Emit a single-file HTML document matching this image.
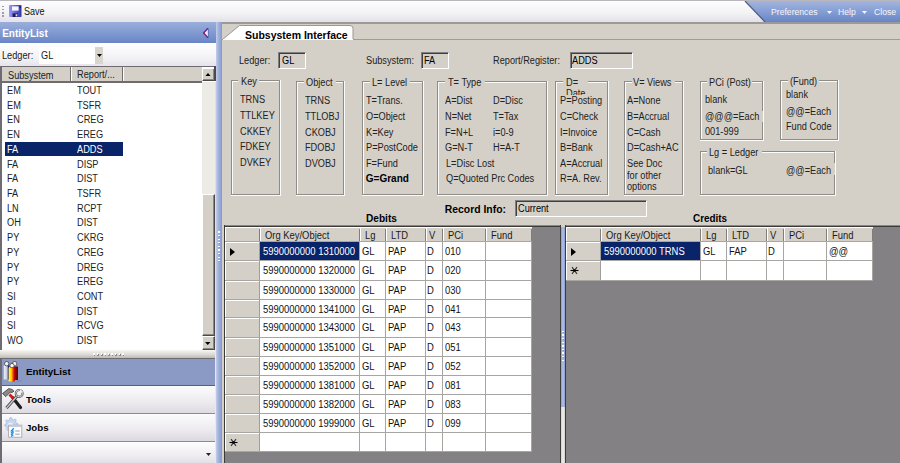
<!DOCTYPE html><html><head><meta charset="utf-8"><style>
html,body{margin:0;padding:0;}
body{width:900px;height:463px;overflow:hidden;position:relative;background:#d4d0c8;font-family:"Liberation Sans", sans-serif;}
.t{position:absolute;white-space:nowrap;}
div{box-sizing:border-box;}
</style></head><body>
<div style="position:absolute;left:0px;top:0px;width:900px;height:1px;background:#b9b7bd"></div>
<div style="position:absolute;left:0px;top:1px;width:900px;height:21px;background:linear-gradient(#fdfdfe,#f2f1f4 60%,#e3e1e8)"></div>
<div style="position:absolute;left:0px;top:21px;width:216px;height:1.5px;background:#e9e4e4"></div>
<div style="position:absolute;left:216px;top:21.5px;width:684px;height:2.2px;background:#a9a6a6"></div>
<div style="position:absolute;left:2px;top:5.5px;width:1.5px;height:1.5px;background:#9c9cac"></div>
<div style="position:absolute;left:2px;top:8.8px;width:1.5px;height:1.5px;background:#9c9cac"></div>
<div style="position:absolute;left:2px;top:12.1px;width:1.5px;height:1.5px;background:#9c9cac"></div>
<div style="position:absolute;left:2px;top:15.399999999999999px;width:1.5px;height:1.5px;background:#9c9cac"></div>
<svg style="position:absolute;left:8.5px;top:5px" width="13" height="12.5" viewBox="0 0 13 12.5">
<defs><linearGradient id="fg" x1="0" y1="0" x2="1" y2="0"><stop offset="0" stop-color="#9a9af4"/><stop offset="0.5" stop-color="#6464d8"/><stop offset="1" stop-color="#3434a0"/></linearGradient></defs>
<rect x="0" y="0" width="12.5" height="12" rx="0.8" fill="url(#fg)"/>
<rect x="3" y="1.4" width="6.6" height="4.2" fill="#f6f6ff"/>
<rect x="3.6" y="8.4" width="5.4" height="3.6" fill="#1c1c50"/>
<rect x="6.6" y="9.2" width="1.8" height="2.2" fill="#d8d8f0"/>
<rect x="10.6" y="1" width="1.4" height="2" fill="#202070"/>
</svg>
<div class="t" style="left:24px;top:6.74px;font-size:10px;line-height:10px;color:#111;font-weight:normal;transform:scaleX(0.9);transform-origin:0 0;">Save</div>
<svg style="position:absolute;left:744px;top:1px" width="156" height="21" viewBox="0 0 156 21">
<defs><linearGradient id="mg" x1="0" y1="0" x2="0" y2="1"><stop offset="0" stop-color="#a3b5df"/><stop offset="1" stop-color="#6786c7"/></linearGradient></defs>
<polygon points="1,0 156,0 156,21 21,21" fill="url(#mg)"/>
<line x1="1" y1="0" x2="21" y2="21" stroke="#4a5a86" stroke-width="1.2"/>
</svg>
<div class="t" style="left:770.6px;top:7.07px;font-size:9.6px;line-height:9.6px;color:#f4f6fc;font-weight:normal;transform:scaleX(0.9);transform-origin:0 0;">Preferences</div>
<svg style="position:absolute;left:827px;top:10.5px" width="5" height="3" viewBox="0 0 5 3"><polygon points="0,0 5,0 2.5,3" fill="#f4f6fc"/></svg>
<div class="t" style="left:837.8px;top:7.07px;font-size:9.6px;line-height:9.6px;color:#f4f6fc;font-weight:normal;transform:scaleX(0.9);transform-origin:0 0;">Help</div>
<svg style="position:absolute;left:862px;top:10.5px" width="5" height="3" viewBox="0 0 5 3"><polygon points="0,0 5,0 2.5,3" fill="#f4f6fc"/></svg>
<div class="t" style="left:874.2px;top:7.07px;font-size:9.6px;line-height:9.6px;color:#f4f6fc;font-weight:normal;transform:scaleX(0.9);transform-origin:0 0;">Close</div>
<div style="position:absolute;left:0px;top:22px;width:216px;height:21.2px;background:linear-gradient(#9aaedb,#6986c6)"></div>
<div class="t" style="left:2.2px;top:28.73px;font-size:10px;line-height:10px;color:#fff;font-weight:bold;">EntityList</div>
<svg style="position:absolute;left:202px;top:27px" width="8" height="12" viewBox="0 0 8 12">
<polygon points="6,1.5 6,10.5 1.8,6" fill="#f4f0f8"/>
<path d="M6,1.3 L1.6,6 L6,10.7" fill="none" stroke="#6a1a9a" stroke-width="1.3"/>
<path d="M2.2,5.2 L4,3.4 M2.2,6.8 L4,8.6" stroke="#c02040" stroke-width="0.8"/>
<line x1="6.3" y1="1.5" x2="6.3" y2="10.5" stroke="#5a66a8" stroke-width="0.8"/>
</svg>
<div style="position:absolute;left:0px;top:43px;width:216px;height:23px;background:linear-gradient(#ffffff,#f1f0f4 70%,#e6e4ea)"></div>
<div class="t" style="left:2px;top:50.73px;font-size:10px;line-height:10px;color:#1a1a1a;font-weight:normal;transform:scaleX(0.92);transform-origin:0 0;">Ledger:</div>
<div style="position:absolute;left:38.5px;top:46.5px;width:56.5px;height:17px;background:#fff"></div>
<div class="t" style="left:41.3px;top:50.73px;font-size:10px;line-height:10px;color:#1a1a1a;font-weight:normal;transform:scaleX(0.92);transform-origin:0 0;">GL</div>
<div style="position:absolute;left:95px;top:46.5px;width:8px;height:17px;background:#d8d5ce"></div>
<svg style="position:absolute;left:97px;top:54px" width="5" height="3" viewBox="0 0 5 3"><polygon points="0,0 5,0 2.5,3" fill="#000"/></svg>
<div style="position:absolute;left:0px;top:66px;width:216px;height:284px;background:#fff"></div>
<div style="position:absolute;left:0px;top:66px;width:2px;height:284px;background:#6e6c70"></div>
<div style="position:absolute;left:0px;top:66px;width:216px;height:1px;background:#6e6c70"></div>
<div style="position:absolute;left:2px;top:67px;width:200px;height:14px;background:#d4d0c8"></div>
<div style="position:absolute;left:2px;top:81px;width:200px;height:1.5px;background:#6e6c70"></div>
<div style="position:absolute;left:69.5px;top:67px;width:1px;height:14px;background:#6e6c70"></div>
<div style="position:absolute;left:70.5px;top:67px;width:1px;height:14px;background:#fff"></div>
<div style="position:absolute;left:121.8px;top:67px;width:1px;height:14px;background:#6e6c70"></div>
<div style="position:absolute;left:122.8px;top:67px;width:1px;height:14px;background:#fff"></div>
<div class="t" style="left:7.5px;top:70.73px;font-size:10px;line-height:10px;color:#222;font-weight:normal;transform:scaleX(0.92);transform-origin:0 0;">Subsystem</div>
<div class="t" style="left:76.7px;top:69.73px;font-size:10px;line-height:10px;color:#222;font-weight:normal;transform:scaleX(0.92);transform-origin:0 0;">Report/...</div>
<div class="t" style="left:7.4px;top:85.73px;font-size:10px;line-height:10px;color:#222;font-weight:normal;transform:scaleX(0.92);transform-origin:0 0;">EM</div>
<div class="t" style="left:77.2px;top:85.73px;font-size:10px;line-height:10px;color:#222;font-weight:normal;transform:scaleX(0.92);transform-origin:0 0;">TOUT</div>
<div class="t" style="left:7.4px;top:100.73px;font-size:10px;line-height:10px;color:#222;font-weight:normal;transform:scaleX(0.92);transform-origin:0 0;">EM</div>
<div class="t" style="left:77.2px;top:100.73px;font-size:10px;line-height:10px;color:#222;font-weight:normal;transform:scaleX(0.92);transform-origin:0 0;">TSFR</div>
<div class="t" style="left:7.4px;top:114.73px;font-size:10px;line-height:10px;color:#222;font-weight:normal;transform:scaleX(0.92);transform-origin:0 0;">EN</div>
<div class="t" style="left:77.2px;top:114.73px;font-size:10px;line-height:10px;color:#222;font-weight:normal;transform:scaleX(0.92);transform-origin:0 0;">CREG</div>
<div class="t" style="left:7.4px;top:129.73px;font-size:10px;line-height:10px;color:#222;font-weight:normal;transform:scaleX(0.92);transform-origin:0 0;">EN</div>
<div class="t" style="left:77.2px;top:129.73px;font-size:10px;line-height:10px;color:#222;font-weight:normal;transform:scaleX(0.92);transform-origin:0 0;">EREG</div>
<div style="position:absolute;left:4.75px;top:141.68px;width:118.5px;height:14.2px;background:#0a246a"></div>
<div class="t" style="left:7.4px;top:144.73px;font-size:10px;line-height:10px;color:#fff;font-weight:normal;transform:scaleX(0.92);transform-origin:0 0;">FA</div>
<div class="t" style="left:77.2px;top:144.73px;font-size:10px;line-height:10px;color:#fff;font-weight:normal;transform:scaleX(0.92);transform-origin:0 0;">ADDS</div>
<div class="t" style="left:7.4px;top:159.73px;font-size:10px;line-height:10px;color:#222;font-weight:normal;transform:scaleX(0.92);transform-origin:0 0;">FA</div>
<div class="t" style="left:77.2px;top:159.73px;font-size:10px;line-height:10px;color:#222;font-weight:normal;transform:scaleX(0.92);transform-origin:0 0;">DISP</div>
<div class="t" style="left:7.4px;top:173.73px;font-size:10px;line-height:10px;color:#222;font-weight:normal;transform:scaleX(0.92);transform-origin:0 0;">FA</div>
<div class="t" style="left:77.2px;top:173.73px;font-size:10px;line-height:10px;color:#222;font-weight:normal;transform:scaleX(0.92);transform-origin:0 0;">DIST</div>
<div class="t" style="left:7.4px;top:188.73px;font-size:10px;line-height:10px;color:#222;font-weight:normal;transform:scaleX(0.92);transform-origin:0 0;">FA</div>
<div class="t" style="left:77.2px;top:188.73px;font-size:10px;line-height:10px;color:#222;font-weight:normal;transform:scaleX(0.92);transform-origin:0 0;">TSFR</div>
<div class="t" style="left:7.4px;top:203.73px;font-size:10px;line-height:10px;color:#222;font-weight:normal;transform:scaleX(0.92);transform-origin:0 0;">LN</div>
<div class="t" style="left:77.2px;top:203.73px;font-size:10px;line-height:10px;color:#222;font-weight:normal;transform:scaleX(0.92);transform-origin:0 0;">RCPT</div>
<div class="t" style="left:7.4px;top:217.73px;font-size:10px;line-height:10px;color:#222;font-weight:normal;transform:scaleX(0.92);transform-origin:0 0;">OH</div>
<div class="t" style="left:77.2px;top:217.73px;font-size:10px;line-height:10px;color:#222;font-weight:normal;transform:scaleX(0.92);transform-origin:0 0;">DIST</div>
<div class="t" style="left:7.4px;top:232.73px;font-size:10px;line-height:10px;color:#222;font-weight:normal;transform:scaleX(0.92);transform-origin:0 0;">PY</div>
<div class="t" style="left:77.2px;top:232.73px;font-size:10px;line-height:10px;color:#222;font-weight:normal;transform:scaleX(0.92);transform-origin:0 0;">CKRG</div>
<div class="t" style="left:7.4px;top:247.73px;font-size:10px;line-height:10px;color:#222;font-weight:normal;transform:scaleX(0.92);transform-origin:0 0;">PY</div>
<div class="t" style="left:77.2px;top:247.73px;font-size:10px;line-height:10px;color:#222;font-weight:normal;transform:scaleX(0.92);transform-origin:0 0;">CREG</div>
<div class="t" style="left:7.4px;top:262.74px;font-size:10px;line-height:10px;color:#222;font-weight:normal;transform:scaleX(0.92);transform-origin:0 0;">PY</div>
<div class="t" style="left:77.2px;top:262.74px;font-size:10px;line-height:10px;color:#222;font-weight:normal;transform:scaleX(0.92);transform-origin:0 0;">DREG</div>
<div class="t" style="left:7.4px;top:276.74px;font-size:10px;line-height:10px;color:#222;font-weight:normal;transform:scaleX(0.92);transform-origin:0 0;">PY</div>
<div class="t" style="left:77.2px;top:276.74px;font-size:10px;line-height:10px;color:#222;font-weight:normal;transform:scaleX(0.92);transform-origin:0 0;">EREG</div>
<div class="t" style="left:7.4px;top:291.74px;font-size:10px;line-height:10px;color:#222;font-weight:normal;transform:scaleX(0.92);transform-origin:0 0;">SI</div>
<div class="t" style="left:77.2px;top:291.74px;font-size:10px;line-height:10px;color:#222;font-weight:normal;transform:scaleX(0.92);transform-origin:0 0;">CONT</div>
<div class="t" style="left:7.4px;top:306.74px;font-size:10px;line-height:10px;color:#222;font-weight:normal;transform:scaleX(0.92);transform-origin:0 0;">SI</div>
<div class="t" style="left:77.2px;top:306.74px;font-size:10px;line-height:10px;color:#222;font-weight:normal;transform:scaleX(0.92);transform-origin:0 0;">DIST</div>
<div class="t" style="left:7.4px;top:320.74px;font-size:10px;line-height:10px;color:#222;font-weight:normal;transform:scaleX(0.92);transform-origin:0 0;">SI</div>
<div class="t" style="left:77.2px;top:320.74px;font-size:10px;line-height:10px;color:#222;font-weight:normal;transform:scaleX(0.92);transform-origin:0 0;">RCVG</div>
<div class="t" style="left:7.4px;top:335.74px;font-size:10px;line-height:10px;color:#222;font-weight:normal;transform:scaleX(0.92);transform-origin:0 0;">WO</div>
<div class="t" style="left:77.2px;top:335.74px;font-size:10px;line-height:10px;color:#222;font-weight:normal;transform:scaleX(0.92);transform-origin:0 0;">DIST</div>
<div style="position:absolute;left:201.5px;top:82px;width:14px;height:268px;background:#ecebe6"></div>
<div style="position:absolute;left:201.5px;top:68px;width:13.5px;height:13px;background:#d4d0c8;border-right:1px solid #4a4a4a;border-bottom:1px solid #4a4a4a;border-top:1px solid #fff;border-left:1px solid #fff;box-shadow:inset -1px -1px 0 #8a8884"></div>
<svg style="position:absolute;left:204.5px;top:72.5px" width="6" height="3.5" viewBox="0 0 6 3.5"><polygon points="0,3.5 6,3.5 3,0" fill="#000"/></svg>
<div style="position:absolute;left:201.5px;top:193.5px;width:13.8px;height:142.5px;background:#d4d0c8;border-right:1px solid #4a4a4a;border-bottom:1px solid #4a4a4a;border-top:1px solid #fff;border-left:1px solid #fff;box-shadow:inset -1px -1px 0 #8a8884"></div>
<div style="position:absolute;left:201.5px;top:336px;width:13.8px;height:13.5px;background:#d4d0c8;border-right:1px solid #4a4a4a;border-bottom:1px solid #4a4a4a;border-top:1px solid #fff;border-left:1px solid #fff;box-shadow:inset -1px -1px 0 #8a8884"></div>
<svg style="position:absolute;left:205px;top:341.5px" width="5.5" height="3" viewBox="0 0 5.5 3"><polygon points="0,0 5.5,0 2.75,3" fill="#000"/></svg>
<div style="position:absolute;left:214px;top:66px;width:1.5px;height:15px;background:#4a4a4a"></div>
<div style="position:absolute;left:215.3px;top:82px;width:1px;height:268px;background:#e2e0da"></div>
<div style="position:absolute;left:0px;top:349.5px;width:216px;height:8.5px;background:linear-gradient(#f8f7f4,#dcdad4 55%,#bdbab4)"></div>
<div style="position:absolute;left:93.8px;top:354px;width:1.5px;height:1.5px;background:#8c8a86"></div>
<div style="position:absolute;left:93.3px;top:353.3px;width:1.5px;height:1.5px;background:#fff"></div>
<div style="position:absolute;left:97.39999999999999px;top:354px;width:1.5px;height:1.5px;background:#8c8a86"></div>
<div style="position:absolute;left:96.89999999999999px;top:353.3px;width:1.5px;height:1.5px;background:#fff"></div>
<div style="position:absolute;left:101.0px;top:354px;width:1.5px;height:1.5px;background:#8c8a86"></div>
<div style="position:absolute;left:100.5px;top:353.3px;width:1.5px;height:1.5px;background:#fff"></div>
<div style="position:absolute;left:104.6px;top:354px;width:1.5px;height:1.5px;background:#8c8a86"></div>
<div style="position:absolute;left:104.1px;top:353.3px;width:1.5px;height:1.5px;background:#fff"></div>
<div style="position:absolute;left:108.2px;top:354px;width:1.5px;height:1.5px;background:#8c8a86"></div>
<div style="position:absolute;left:107.7px;top:353.3px;width:1.5px;height:1.5px;background:#fff"></div>
<div style="position:absolute;left:111.8px;top:354px;width:1.5px;height:1.5px;background:#8c8a86"></div>
<div style="position:absolute;left:111.3px;top:353.3px;width:1.5px;height:1.5px;background:#fff"></div>
<div style="position:absolute;left:115.4px;top:354px;width:1.5px;height:1.5px;background:#8c8a86"></div>
<div style="position:absolute;left:114.9px;top:353.3px;width:1.5px;height:1.5px;background:#fff"></div>
<div style="position:absolute;left:119.0px;top:354px;width:1.5px;height:1.5px;background:#8c8a86"></div>
<div style="position:absolute;left:118.5px;top:353.3px;width:1.5px;height:1.5px;background:#fff"></div>
<div style="position:absolute;left:122.6px;top:354px;width:1.5px;height:1.5px;background:#8c8a86"></div>
<div style="position:absolute;left:122.1px;top:353.3px;width:1.5px;height:1.5px;background:#fff"></div>
<div style="position:absolute;left:0px;top:357.5px;width:216px;height:1.5px;background:#6d6b70"></div>
<div style="position:absolute;left:0px;top:359px;width:216px;height:26.5px;background:#8a9ac5"></div>
<div style="position:absolute;left:0px;top:385.3px;width:216px;height:1px;background:#55607e"></div>
<div style="position:absolute;left:0px;top:386px;width:216px;height:27.5px;background:linear-gradient(#fbfbfc,#eceaef 60%,#dcdae0)"></div>
<div style="position:absolute;left:0px;top:413.2px;width:216px;height:1px;background:#8d8b92"></div>
<div style="position:absolute;left:0px;top:414px;width:216px;height:27px;background:linear-gradient(#fbfbfc,#eceaef 60%,#dcdae0)"></div>
<div style="position:absolute;left:0px;top:441px;width:216px;height:1px;background:#8d8b92"></div>
<div style="position:absolute;left:0px;top:442px;width:216px;height:21px;background:linear-gradient(#fdfdfe,#efeef2 60%,#e2e0e6)"></div>
<svg style="position:absolute;left:206px;top:453px" width="5" height="3" viewBox="0 0 5 3"><polygon points="0,0 5,0 2.5,3" fill="#222"/></svg>
<div style="position:absolute;left:0px;top:359px;width:1.5px;height:104px;background:#6d6b70"></div>
<div class="t" style="left:26px;top:367.24px;font-size:9.4px;line-height:9.4px;color:#000;font-weight:bold;transform:scaleX(1.05);transform-origin:0 0;">EntityList</div>
<div class="t" style="left:26.2px;top:395.24px;font-size:9.4px;line-height:9.4px;color:#000;font-weight:bold;transform:scaleX(1.03);transform-origin:0 0;">Tools</div>
<div class="t" style="left:26.2px;top:423.24px;font-size:9.4px;line-height:9.4px;color:#000;font-weight:bold;transform:scaleX(1.03);transform-origin:0 0;">Jobs</div>
<svg style="position:absolute;left:0px;top:358px" width="25" height="28" viewBox="0 0 25 28">
<defs>
<linearGradient id="e1" x1="0" x2="1"><stop offset="0" stop-color="#f0f0f8"/><stop offset="0.6" stop-color="#c8c8e0"/><stop offset="0.8" stop-color="#20208a"/><stop offset="1" stop-color="#101060"/></linearGradient>
<linearGradient id="e2" x1="0" x2="1"><stop offset="0" stop-color="#ffff30"/><stop offset="0.45" stop-color="#ffd000"/><stop offset="0.75" stop-color="#ff3000"/><stop offset="1" stop-color="#b00000"/></linearGradient>
<linearGradient id="e3" x1="0" x2="1"><stop offset="0" stop-color="#c02020"/><stop offset="1" stop-color="#600000"/></linearGradient>
</defs>
<ellipse cx="19" cy="23" rx="3" ry="1" fill="#7a86a8" opacity="0.6"/>
<path d="M12,8.5 h6 v13.5 h-6 z" fill="url(#e3)"/>
<circle cx="14.6" cy="5.8" r="2.3" fill="#f4f4f4" stroke="#404040" stroke-width="0.8"/>
<path d="M3.8,8 q0,-1.2 1.5,-1.5 h2.6 q1.5,0.3 1.5,1.5 v13.5 h-5.6 z" fill="url(#e1)"/>
<circle cx="6.7" cy="5.7" r="2.2" fill="#f4f4f4" stroke="#404040" stroke-width="0.8"/>
<path d="M8.6,10 q0,-1 1.3,-1.3 h3.6 q1.3,0.3 1.3,1.3 v13.5 h-6.2 z" fill="url(#e2)"/>
<circle cx="12" cy="7.6" r="2.2" fill="#f8f8f8" stroke="#404040" stroke-width="0.8"/>
</svg>
<svg style="position:absolute;left:0px;top:386px" width="25" height="28" viewBox="0 0 25 28">
<line x1="13" y1="12" x2="20.5" y2="21.5" stroke="#1c1c1c" stroke-width="3.2" stroke-linecap="round"/>
<line x1="6.5" y1="22" x2="17.5" y2="9.5" stroke="#3a3a3a" stroke-width="3"/>
<line x1="6.5" y1="22" x2="17.5" y2="9.5" stroke="#c8c8c8" stroke-width="1.4"/>
<circle cx="19.2" cy="7.4" r="3.4" fill="none" stroke="#5a5a5a" stroke-width="2.2"/>
<circle cx="19.2" cy="7.4" r="3.4" fill="none" stroke="#d0d0d0" stroke-width="1"/>
<path d="M20,3 l3,3 l-3,1.5 z" fill="#eeedf1"/>
<line x1="9.5" y1="8.5" x2="13.2" y2="12.2" stroke="#d01818" stroke-width="2.8"/>
<path d="M2.5,7.5 L8.8,2.6 L12,3.4 L14,5.2 L12.2,6.4 L10.2,6.2 L5.8,10.6 Z" fill="#8a8a8a" stroke="#3a3a3a" stroke-width="0.8"/>
</svg>
<svg style="position:absolute;left:0px;top:414px" width="25" height="27" viewBox="0 0 25 27">
<g fill="#c6d6ee" stroke="#9fb7dc" stroke-width="0.7">
<path d="M10,3.5 l1.6,0.3 l0.6,1.5 l1.5,0.6 l1.4,-0.9 l1.2,1 l-0.8,1.4 l0.6,1.5 l1.6,0.4 l0.2,1.6 l-1.5,0.6 l-0.3,1.6 l1,1.3 l-1,1.2 l-1.4,-0.8 l-1.5,0.7 l-0.4,1.6 l-1.6,0.2 l-0.6,-1.5 l-1.6,-0.4 l-1.3,1 l-1.2,-1 l0.8,-1.4 l-0.7,-1.5 l-1.6,-0.4 l-0.2,-1.6 l1.5,-0.6 l0.3,-1.6 l-1,-1.3 l1,-1.2 l1.4,0.8 l1.5,-0.7 z"/>
</g>
<circle cx="10.3" cy="11" r="2.6" fill="#eeedf1"/>
<rect x="8.6" y="11.2" width="13.2" height="12" fill="#fbfcfe" stroke="#a8a8b0" stroke-width="0.9"/>
<rect x="9" y="11.6" width="12.4" height="1.4" fill="#c8d0dc"/>
<path d="M13.8,14.2 l-2.4,2.6 l1.6,0.3 l-2,2.2" fill="none" stroke="#1e8ee0" stroke-width="1.3"/>
<path d="M13.6,18.4 l-2.2,2.4 l1.4,0.4 l-1.5,1.4" fill="none" stroke="#1e8ee0" stroke-width="1.2"/>
<line x1="15.2" y1="17" x2="19.8" y2="17" stroke="#9aa0b0" stroke-width="1"/>
<line x1="15.2" y1="20.2" x2="19.8" y2="20.2" stroke="#9aa0b0" stroke-width="1"/>
</svg>
<div style="position:absolute;left:215px;top:343px;width:1px;height:120px;background:#eae8e4"></div>
<div style="position:absolute;left:216px;top:22px;width:5.6px;height:441px;background:linear-gradient(90deg,#c4cee8,#a4b5de 35%,#93a6d6 70%,#8699cf)"></div>
<div style="position:absolute;left:218.8px;top:231.8px;width:1.4px;height:1.4px;background:#7c90c4"></div>
<div style="position:absolute;left:218.3px;top:231.3px;width:1.4px;height:1.4px;background:#fff"></div>
<div style="position:absolute;left:218.8px;top:235.4px;width:1.4px;height:1.4px;background:#7c90c4"></div>
<div style="position:absolute;left:218.3px;top:234.9px;width:1.4px;height:1.4px;background:#fff"></div>
<div style="position:absolute;left:218.8px;top:239.0px;width:1.4px;height:1.4px;background:#7c90c4"></div>
<div style="position:absolute;left:218.3px;top:238.5px;width:1.4px;height:1.4px;background:#fff"></div>
<div style="position:absolute;left:218.8px;top:242.60000000000002px;width:1.4px;height:1.4px;background:#7c90c4"></div>
<div style="position:absolute;left:218.3px;top:242.10000000000002px;width:1.4px;height:1.4px;background:#fff"></div>
<div style="position:absolute;left:218.8px;top:246.20000000000002px;width:1.4px;height:1.4px;background:#7c90c4"></div>
<div style="position:absolute;left:218.3px;top:245.70000000000002px;width:1.4px;height:1.4px;background:#fff"></div>
<div style="position:absolute;left:218.8px;top:249.8px;width:1.4px;height:1.4px;background:#7c90c4"></div>
<div style="position:absolute;left:218.3px;top:249.3px;width:1.4px;height:1.4px;background:#fff"></div>
<div style="position:absolute;left:218.8px;top:253.4px;width:1.4px;height:1.4px;background:#7c90c4"></div>
<div style="position:absolute;left:218.3px;top:252.9px;width:1.4px;height:1.4px;background:#fff"></div>
<div style="position:absolute;left:218.8px;top:257.0px;width:1.4px;height:1.4px;background:#7c90c4"></div>
<div style="position:absolute;left:218.3px;top:256.5px;width:1.4px;height:1.4px;background:#fff"></div>
<div style="position:absolute;left:218.8px;top:260.6px;width:1.4px;height:1.4px;background:#7c90c4"></div>
<div style="position:absolute;left:218.3px;top:260.1px;width:1.4px;height:1.4px;background:#fff"></div>
<div style="position:absolute;left:222px;top:22px;width:678px;height:1.5px;background:#9c9a98"></div>
<div style="position:absolute;left:222px;top:39px;width:678px;height:1px;background:#9e9c98"></div>
<svg style="position:absolute;left:222px;top:25px" width="132" height="16" viewBox="0 0 132 16">
<path d="M0.5,14.5 L17.5,0.5 L128,0.5 Q131,0.5 131,3.5 L131,14.5 Z" fill="#fff" stroke="#9a9894" stroke-width="1"/>
</svg>
<div style="position:absolute;left:223px;top:39px;width:130px;height:1px;background:#fff"></div>
<div class="t" style="left:245px;top:30.31px;font-size:10.5px;line-height:10.5px;color:#000;font-weight:bold;">Subsystem Interface</div>
<div class="t" style="left:239px;top:55.73px;font-size:10px;line-height:10px;color:#222;font-weight:normal;transform:scaleX(0.92);transform-origin:0 0;">Ledger:</div>
<div style="position:absolute;left:278.4px;top:52.4px;width:27.2px;height:17px;background:#d4d0c8;border-top:1px solid #808080;border-left:1px solid #808080;border-bottom:1px solid #fff;border-right:1px solid #fff"></div>
<div style="position:absolute;left:279.4px;top:53.4px;width:25.2px;height:15px;border-top:1px solid #404040;border-left:1px solid #404040"></div>
<div class="t" style="left:281.5px;top:55.73px;font-size:10px;line-height:10px;color:#000;font-weight:normal;transform:scaleX(0.92);transform-origin:0 0;">GL</div>
<div class="t" style="left:365.6px;top:55.73px;font-size:10px;line-height:10px;color:#222;font-weight:normal;transform:scaleX(0.92);transform-origin:0 0;">Subsystem:</div>
<div style="position:absolute;left:421px;top:52.2px;width:28px;height:17px;background:#d4d0c8;border-top:1px solid #808080;border-left:1px solid #808080;border-bottom:1px solid #fff;border-right:1px solid #fff"></div>
<div style="position:absolute;left:422px;top:53.2px;width:26px;height:15px;border-top:1px solid #404040;border-left:1px solid #404040"></div>
<div class="t" style="left:423.5px;top:55.73px;font-size:10px;line-height:10px;color:#000;font-weight:normal;transform:scaleX(0.92);transform-origin:0 0;">FA</div>
<div class="t" style="left:493.3px;top:55.73px;font-size:10px;line-height:10px;color:#222;font-weight:normal;transform:scaleX(0.92);transform-origin:0 0;">Report/Register:</div>
<div style="position:absolute;left:569.8px;top:52.1px;width:63.4px;height:17px;background:#d4d0c8;border-top:1px solid #808080;border-left:1px solid #808080;border-bottom:1px solid #fff;border-right:1px solid #fff"></div>
<div style="position:absolute;left:570.8px;top:53.1px;width:61.4px;height:15px;border-top:1px solid #404040;border-left:1px solid #404040"></div>
<div class="t" style="left:572px;top:55.73px;font-size:10px;line-height:10px;color:#000;font-weight:normal;transform:scaleX(0.92);transform-origin:0 0;">ADDS</div>
<div style="position:absolute;left:231px;top:80px;width:49px;height:1px;background:#8e8c88"></div>
<div style="position:absolute;left:231px;top:194px;width:49px;height:1px;background:#8e8c88"></div>
<div style="position:absolute;left:231px;top:80px;width:1px;height:115px;background:#8e8c88"></div>
<div style="position:absolute;left:279px;top:80px;width:1px;height:115px;background:#8e8c88"></div>
<div style="position:absolute;left:232px;top:81px;width:47px;height:1px;background:#fbfbfa"></div>
<div style="position:absolute;left:232px;top:81px;width:1px;height:113px;background:#fbfbfa"></div>
<div style="position:absolute;left:280px;top:80px;width:1px;height:116px;background:#fbfbfa"></div>
<div style="position:absolute;left:231px;top:195px;width:50px;height:1px;background:#fbfbfa"></div>
<div style="position:absolute;left:238px;top:80px;width:21px;height:2px;background:#d4d0c8"></div>
<div class="t" style="left:240.6px;top:76.73px;font-size:10px;line-height:10px;color:#222;font-weight:normal;transform:scaleX(0.92);transform-origin:0 0;">Key</div>
<div class="t" style="left:239.5px;top:94.73px;font-size:10px;line-height:10px;color:#222;font-weight:normal;transform:scaleX(0.92);transform-origin:0 0;">TRNS</div>
<div class="t" style="left:239.5px;top:110.73px;font-size:10px;line-height:10px;color:#222;font-weight:normal;transform:scaleX(0.92);transform-origin:0 0;">TTLKEY</div>
<div class="t" style="left:239.5px;top:126.73px;font-size:10px;line-height:10px;color:#222;font-weight:normal;transform:scaleX(0.92);transform-origin:0 0;">CKKEY</div>
<div class="t" style="left:239.5px;top:141.73px;font-size:10px;line-height:10px;color:#222;font-weight:normal;transform:scaleX(0.92);transform-origin:0 0;">FDKEY</div>
<div class="t" style="left:239.5px;top:157.73px;font-size:10px;line-height:10px;color:#222;font-weight:normal;transform:scaleX(0.92);transform-origin:0 0;">DVKEY</div>
<div style="position:absolute;left:296px;top:81px;width:48px;height:1px;background:#8e8c88"></div>
<div style="position:absolute;left:296px;top:194px;width:48px;height:1px;background:#8e8c88"></div>
<div style="position:absolute;left:296px;top:81px;width:1px;height:114px;background:#8e8c88"></div>
<div style="position:absolute;left:343px;top:81px;width:1px;height:114px;background:#8e8c88"></div>
<div style="position:absolute;left:297px;top:82px;width:46px;height:1px;background:#fbfbfa"></div>
<div style="position:absolute;left:297px;top:82px;width:1px;height:112px;background:#fbfbfa"></div>
<div style="position:absolute;left:344px;top:81px;width:1px;height:115px;background:#fbfbfa"></div>
<div style="position:absolute;left:296px;top:195px;width:49px;height:1px;background:#fbfbfa"></div>
<div style="position:absolute;left:304px;top:81px;width:32px;height:2px;background:#d4d0c8"></div>
<div class="t" style="left:306px;top:77.73px;font-size:10px;line-height:10px;color:#222;font-weight:normal;transform:scaleX(0.92);transform-origin:0 0;">Object</div>
<div class="t" style="left:304.6px;top:95.73px;font-size:10px;line-height:10px;color:#222;font-weight:normal;transform:scaleX(0.92);transform-origin:0 0;">TRNS</div>
<div class="t" style="left:304.6px;top:111.73px;font-size:10px;line-height:10px;color:#222;font-weight:normal;transform:scaleX(0.92);transform-origin:0 0;">TTLOBJ</div>
<div class="t" style="left:304.6px;top:127.73px;font-size:10px;line-height:10px;color:#222;font-weight:normal;transform:scaleX(0.92);transform-origin:0 0;">CKOBJ</div>
<div class="t" style="left:304.6px;top:142.73px;font-size:10px;line-height:10px;color:#222;font-weight:normal;transform:scaleX(0.92);transform-origin:0 0;">FDOBJ</div>
<div class="t" style="left:304.6px;top:158.73px;font-size:10px;line-height:10px;color:#222;font-weight:normal;transform:scaleX(0.92);transform-origin:0 0;">DVOBJ</div>
<div style="position:absolute;left:362px;top:81px;width:61px;height:1px;background:#8e8c88"></div>
<div style="position:absolute;left:362px;top:194px;width:61px;height:1px;background:#8e8c88"></div>
<div style="position:absolute;left:362px;top:81px;width:1px;height:114px;background:#8e8c88"></div>
<div style="position:absolute;left:422px;top:81px;width:1px;height:114px;background:#8e8c88"></div>
<div style="position:absolute;left:363px;top:82px;width:59px;height:1px;background:#fbfbfa"></div>
<div style="position:absolute;left:363px;top:82px;width:1px;height:112px;background:#fbfbfa"></div>
<div style="position:absolute;left:423px;top:81px;width:1px;height:115px;background:#fbfbfa"></div>
<div style="position:absolute;left:362px;top:195px;width:62px;height:1px;background:#fbfbfa"></div>
<div style="position:absolute;left:370px;top:81px;width:40px;height:2px;background:#d4d0c8"></div>
<div class="t" style="left:371.8px;top:77.73px;font-size:10px;line-height:10px;color:#222;font-weight:normal;transform:scaleX(0.92);transform-origin:0 0;">L= Level</div>
<div class="t" style="left:366.2px;top:95.73px;font-size:10px;line-height:10px;color:#222;font-weight:normal;transform:scaleX(0.92);transform-origin:0 0;">T=Trans.</div>
<div class="t" style="left:366.2px;top:111.73px;font-size:10px;line-height:10px;color:#222;font-weight:normal;transform:scaleX(0.92);transform-origin:0 0;">O=Object</div>
<div class="t" style="left:366.2px;top:127.73px;font-size:10px;line-height:10px;color:#222;font-weight:normal;transform:scaleX(0.92);transform-origin:0 0;">K=Key</div>
<div class="t" style="left:366.2px;top:142.73px;font-size:10px;line-height:10px;color:#222;font-weight:normal;transform:scaleX(0.92);transform-origin:0 0;">P=PostCode</div>
<div class="t" style="left:366.2px;top:158.73px;font-size:10px;line-height:10px;color:#222;font-weight:normal;transform:scaleX(0.92);transform-origin:0 0;">F=Fund</div>
<div class="t" style="left:365.8px;top:173.73px;font-size:10px;line-height:10px;color:#000;font-weight:bold;">G=Grand</div>
<div style="position:absolute;left:437px;top:81px;width:110px;height:1px;background:#8e8c88"></div>
<div style="position:absolute;left:437px;top:194px;width:110px;height:1px;background:#8e8c88"></div>
<div style="position:absolute;left:437px;top:81px;width:1px;height:114px;background:#8e8c88"></div>
<div style="position:absolute;left:546px;top:81px;width:1px;height:114px;background:#8e8c88"></div>
<div style="position:absolute;left:438px;top:82px;width:108px;height:1px;background:#fbfbfa"></div>
<div style="position:absolute;left:438px;top:82px;width:1px;height:112px;background:#fbfbfa"></div>
<div style="position:absolute;left:547px;top:81px;width:1px;height:115px;background:#fbfbfa"></div>
<div style="position:absolute;left:437px;top:195px;width:111px;height:1px;background:#fbfbfa"></div>
<div style="position:absolute;left:445px;top:81px;width:40px;height:2px;background:#d4d0c8"></div>
<div class="t" style="left:447.8px;top:77.73px;font-size:10px;line-height:10px;color:#222;font-weight:normal;transform:scaleX(0.92);transform-origin:0 0;">T= Type</div>
<div class="t" style="left:445.1px;top:95.73px;font-size:10px;line-height:10px;color:#222;font-weight:normal;transform:scaleX(0.92);transform-origin:0 0;">A=Dist</div>
<div class="t" style="left:493.2px;top:95.73px;font-size:10px;line-height:10px;color:#222;font-weight:normal;transform:scaleX(0.92);transform-origin:0 0;">D=Disc</div>
<div class="t" style="left:445.1px;top:111.73px;font-size:10px;line-height:10px;color:#222;font-weight:normal;transform:scaleX(0.92);transform-origin:0 0;">N=Net</div>
<div class="t" style="left:493.2px;top:111.73px;font-size:10px;line-height:10px;color:#222;font-weight:normal;transform:scaleX(0.92);transform-origin:0 0;">T=Tax</div>
<div class="t" style="left:445.1px;top:127.73px;font-size:10px;line-height:10px;color:#222;font-weight:normal;transform:scaleX(0.92);transform-origin:0 0;">F=N+L</div>
<div class="t" style="left:493.2px;top:127.73px;font-size:10px;line-height:10px;color:#222;font-weight:normal;transform:scaleX(0.92);transform-origin:0 0;">i=0-9</div>
<div class="t" style="left:445.1px;top:142.73px;font-size:10px;line-height:10px;color:#222;font-weight:normal;transform:scaleX(0.92);transform-origin:0 0;">G=N-T</div>
<div class="t" style="left:493.2px;top:142.73px;font-size:10px;line-height:10px;color:#222;font-weight:normal;transform:scaleX(0.92);transform-origin:0 0;">H=A-T</div>
<div class="t" style="left:445.5px;top:158.73px;font-size:10px;line-height:10px;color:#222;font-weight:normal;transform:scaleX(0.92);transform-origin:0 0;">L=Disc Lost</div>
<div class="t" style="left:445.5px;top:173.73px;font-size:10px;line-height:10px;color:#222;font-weight:normal;transform:scaleX(0.92);transform-origin:0 0;">Q=Quoted Prc Codes</div>
<div style="position:absolute;left:555px;top:81px;width:53px;height:1px;background:#8e8c88"></div>
<div style="position:absolute;left:555px;top:194px;width:53px;height:1px;background:#8e8c88"></div>
<div style="position:absolute;left:555px;top:81px;width:1px;height:114px;background:#8e8c88"></div>
<div style="position:absolute;left:607px;top:81px;width:1px;height:114px;background:#8e8c88"></div>
<div style="position:absolute;left:556px;top:82px;width:51px;height:1px;background:#fbfbfa"></div>
<div style="position:absolute;left:556px;top:82px;width:1px;height:112px;background:#fbfbfa"></div>
<div style="position:absolute;left:608px;top:81px;width:1px;height:115px;background:#fbfbfa"></div>
<div style="position:absolute;left:555px;top:195px;width:54px;height:1px;background:#fbfbfa"></div>
<div style="position:absolute;left:563px;top:81px;width:25px;height:2px;background:#d4d0c8"></div>
<div class="t" style="left:566px;top:77.73px;font-size:10px;line-height:10px;color:#222;font-weight:normal;transform:scaleX(0.92);transform-origin:0 0;">D=</div>
<div style="position:absolute;left:563px;top:88px;width:25px;height:7px;overflow:hidden">
<div class="t" style="left:3px;top:1.3px;font-size:10px;line-height:10px;color:#222;transform:scaleX(0.92);transform-origin:0 0">Date</div>
</div>
<div class="t" style="left:560px;top:95.73px;font-size:10px;line-height:10px;color:#222;font-weight:normal;transform:scaleX(0.92);transform-origin:0 0;">P=Posting</div>
<div class="t" style="left:560px;top:111.73px;font-size:10px;line-height:10px;color:#222;font-weight:normal;transform:scaleX(0.92);transform-origin:0 0;">C=Check</div>
<div class="t" style="left:560px;top:127.73px;font-size:10px;line-height:10px;color:#222;font-weight:normal;transform:scaleX(0.92);transform-origin:0 0;">I=Invoice</div>
<div class="t" style="left:560px;top:142.73px;font-size:10px;line-height:10px;color:#222;font-weight:normal;transform:scaleX(0.92);transform-origin:0 0;">B=Bank</div>
<div class="t" style="left:560px;top:158.73px;font-size:10px;line-height:10px;color:#222;font-weight:normal;transform:scaleX(0.92);transform-origin:0 0;">A=Accrual</div>
<div class="t" style="left:560px;top:173.73px;font-size:10px;line-height:10px;color:#222;font-weight:normal;transform:scaleX(0.92);transform-origin:0 0;">R=A. Rev.</div>
<div style="position:absolute;left:624px;top:81px;width:59px;height:1px;background:#8e8c88"></div>
<div style="position:absolute;left:624px;top:194px;width:59px;height:1px;background:#8e8c88"></div>
<div style="position:absolute;left:624px;top:81px;width:1px;height:114px;background:#8e8c88"></div>
<div style="position:absolute;left:682px;top:81px;width:1px;height:114px;background:#8e8c88"></div>
<div style="position:absolute;left:625px;top:82px;width:57px;height:1px;background:#fbfbfa"></div>
<div style="position:absolute;left:625px;top:82px;width:1px;height:112px;background:#fbfbfa"></div>
<div style="position:absolute;left:683px;top:81px;width:1px;height:115px;background:#fbfbfa"></div>
<div style="position:absolute;left:624px;top:195px;width:60px;height:1px;background:#fbfbfa"></div>
<div style="position:absolute;left:632px;top:81px;width:43px;height:2px;background:#d4d0c8"></div>
<div class="t" style="left:633.2px;top:77.73px;font-size:10px;line-height:10px;color:#222;font-weight:normal;transform:scaleX(0.92);transform-origin:0 0;">V= Views</div>
<div class="t" style="left:627.3px;top:95.73px;font-size:10px;line-height:10px;color:#222;font-weight:normal;transform:scaleX(0.92);transform-origin:0 0;">A=None</div>
<div class="t" style="left:627.3px;top:111.73px;font-size:10px;line-height:10px;color:#222;font-weight:normal;transform:scaleX(0.92);transform-origin:0 0;">B=Accrual</div>
<div class="t" style="left:627.3px;top:127.73px;font-size:10px;line-height:10px;color:#222;font-weight:normal;transform:scaleX(0.92);transform-origin:0 0;">C=Cash</div>
<div class="t" style="left:627.3px;top:142.73px;font-size:10px;line-height:10px;color:#222;font-weight:normal;transform:scaleX(0.92);transform-origin:0 0;">D=Cash+AC</div>
<div class="t" style="left:627.3px;top:158.73px;font-size:10px;line-height:10px;color:#222;font-weight:normal;transform:scaleX(0.92);transform-origin:0 0;">See Doc</div>
<div class="t" style="left:627.3px;top:170.73px;font-size:10px;line-height:10px;color:#222;font-weight:normal;transform:scaleX(0.92);transform-origin:0 0;">for other</div>
<div class="t" style="left:627.3px;top:181.73px;font-size:10px;line-height:10px;color:#222;font-weight:normal;transform:scaleX(0.92);transform-origin:0 0;">options</div>
<div style="position:absolute;left:700px;top:81px;width:63px;height:1px;background:#8e8c88"></div>
<div style="position:absolute;left:700px;top:139px;width:63px;height:1px;background:#8e8c88"></div>
<div style="position:absolute;left:700px;top:81px;width:1px;height:59px;background:#8e8c88"></div>
<div style="position:absolute;left:762px;top:81px;width:1px;height:59px;background:#8e8c88"></div>
<div style="position:absolute;left:701px;top:82px;width:61px;height:1px;background:#fbfbfa"></div>
<div style="position:absolute;left:701px;top:82px;width:1px;height:57px;background:#fbfbfa"></div>
<div style="position:absolute;left:763px;top:81px;width:1px;height:60px;background:#fbfbfa"></div>
<div style="position:absolute;left:700px;top:140px;width:64px;height:1px;background:#fbfbfa"></div>
<div style="position:absolute;left:707px;top:81px;width:45px;height:2px;background:#d4d0c8"></div>
<div class="t" style="left:709.4px;top:77.73px;font-size:10px;line-height:10px;color:#222;font-weight:normal;transform:scaleX(0.92);transform-origin:0 0;">PCi (Post)</div>
<div class="t" style="left:705px;top:94.73px;font-size:10px;line-height:10px;color:#222;font-weight:normal;transform:scaleX(0.92);transform-origin:0 0;">blank</div>
<div class="t" style="left:705px;top:111.73px;font-size:10px;line-height:10px;color:#222;font-weight:normal;transform:scaleX(0.92);transform-origin:0 0;">@@@=Each</div>
<div class="t" style="left:705px;top:126.73px;font-size:10px;line-height:10px;color:#222;font-weight:normal;transform:scaleX(0.92);transform-origin:0 0;">001-999</div>
<div style="position:absolute;left:762px;top:111px;width:1px;height:11px;background:#d4d0c8"></div>
<div style="position:absolute;left:780px;top:80px;width:58px;height:1px;background:#8e8c88"></div>
<div style="position:absolute;left:780px;top:139px;width:58px;height:1px;background:#8e8c88"></div>
<div style="position:absolute;left:780px;top:80px;width:1px;height:60px;background:#8e8c88"></div>
<div style="position:absolute;left:837px;top:80px;width:1px;height:60px;background:#8e8c88"></div>
<div style="position:absolute;left:781px;top:81px;width:56px;height:1px;background:#fbfbfa"></div>
<div style="position:absolute;left:781px;top:81px;width:1px;height:58px;background:#fbfbfa"></div>
<div style="position:absolute;left:838px;top:80px;width:1px;height:61px;background:#fbfbfa"></div>
<div style="position:absolute;left:780px;top:140px;width:59px;height:1px;background:#fbfbfa"></div>
<div style="position:absolute;left:788px;top:80px;width:31px;height:2px;background:#d4d0c8"></div>
<div class="t" style="left:790.4px;top:76.73px;font-size:10px;line-height:10px;color:#222;font-weight:normal;transform:scaleX(0.92);transform-origin:0 0;">(Fund)</div>
<div class="t" style="left:786.2px;top:89.73px;font-size:10px;line-height:10px;color:#222;font-weight:normal;transform:scaleX(0.92);transform-origin:0 0;">blank</div>
<div class="t" style="left:786.2px;top:106.73px;font-size:10px;line-height:10px;color:#222;font-weight:normal;transform:scaleX(0.92);transform-origin:0 0;">@@=Each</div>
<div class="t" style="left:786.2px;top:121.73px;font-size:10px;line-height:10px;color:#222;font-weight:normal;transform:scaleX(0.92);transform-origin:0 0;">Fund Code</div>
<div style="position:absolute;left:700px;top:151px;width:135px;height:1px;background:#8e8c88"></div>
<div style="position:absolute;left:700px;top:194px;width:135px;height:1px;background:#8e8c88"></div>
<div style="position:absolute;left:700px;top:151px;width:1px;height:44px;background:#8e8c88"></div>
<div style="position:absolute;left:834px;top:151px;width:1px;height:44px;background:#8e8c88"></div>
<div style="position:absolute;left:701px;top:152px;width:133px;height:1px;background:#fbfbfa"></div>
<div style="position:absolute;left:701px;top:152px;width:1px;height:42px;background:#fbfbfa"></div>
<div style="position:absolute;left:835px;top:151px;width:1px;height:45px;background:#fbfbfa"></div>
<div style="position:absolute;left:700px;top:195px;width:136px;height:1px;background:#fbfbfa"></div>
<div style="position:absolute;left:707px;top:151px;width:55px;height:2px;background:#d4d0c8"></div>
<div class="t" style="left:709.2px;top:147.73px;font-size:10px;line-height:10px;color:#222;font-weight:normal;transform:scaleX(0.92);transform-origin:0 0;">Lg = Ledger</div>
<div class="t" style="left:707.8px;top:165.73px;font-size:10px;line-height:10px;color:#222;font-weight:normal;transform:scaleX(0.92);transform-origin:0 0;">blank=GL</div>
<div class="t" style="left:786px;top:165.73px;font-size:10px;line-height:10px;color:#222;font-weight:normal;transform:scaleX(0.92);transform-origin:0 0;">@@=Each</div>
<div style="position:absolute;left:834px;top:163px;width:1px;height:12px;background:#d4d0c8"></div>
<div class="t" style="left:444.8px;top:205.40px;font-size:10.4px;line-height:10.4px;color:#000;font-weight:bold;">Record Info:</div>
<div style="position:absolute;left:514.6px;top:200.4px;width:132.7px;height:17.1px;background:#d4d0c8;border-top:1px solid #808080;border-left:1px solid #808080;border-bottom:1px solid #fff;border-right:1px solid #fff"></div>
<div style="position:absolute;left:515.6px;top:201.4px;width:130.7px;height:15.100000000000001px;border-top:1px solid #404040;border-left:1px solid #404040"></div>
<div class="t" style="left:517.5px;top:203.73px;font-size:10px;line-height:10px;color:#000;font-weight:normal;transform:scaleX(0.92);transform-origin:0 0;">Current</div>
<div class="t" style="left:366px;top:212.89px;font-size:11px;line-height:11px;color:#000;font-weight:bold;transform:scaleX(0.92);transform-origin:0 0;">Debits</div>
<div class="t" style="left:693.3px;top:212.89px;font-size:11px;line-height:11px;color:#000;font-weight:bold;transform:scaleX(0.9);transform-origin:0 0;">Credits</div>
<div style="position:absolute;left:225px;top:227px;width:335px;height:236px;background:#838183"></div>
<div style="position:absolute;left:224px;top:226px;width:336px;height:1px;background:#3a3a3a"></div>
<div style="position:absolute;left:224px;top:225px;width:336px;height:1px;background:#8a8886"></div>
<div style="position:absolute;left:224px;top:225px;width:1px;height:238px;background:#3a3a3a"></div>
<div style="position:absolute;left:225px;top:227px;width:307px;height:14px;background:#d4d0c8"></div>
<div style="position:absolute;left:225px;top:227px;width:307px;height:1px;background:#fff"></div>
<div style="position:absolute;left:225px;top:227px;width:1px;height:14px;background:#fff"></div>
<div style="position:absolute;left:259px;top:228.5px;width:1px;height:12px;background:#807e7c"></div>
<div style="position:absolute;left:260px;top:228px;width:1px;height:13px;background:#fff"></div>
<div style="position:absolute;left:359px;top:228.5px;width:1px;height:12px;background:#807e7c"></div>
<div style="position:absolute;left:360px;top:228px;width:1px;height:13px;background:#fff"></div>
<div class="t" style="left:265.3px;top:230.73px;font-size:10px;line-height:10px;color:#1a1a1a;font-weight:normal;transform:scaleX(0.94);transform-origin:0 0;">Org Key/Object</div>
<div style="position:absolute;left:385px;top:228.5px;width:1px;height:12px;background:#807e7c"></div>
<div style="position:absolute;left:386px;top:228px;width:1px;height:13px;background:#fff"></div>
<div class="t" style="left:365.3px;top:230.73px;font-size:10px;line-height:10px;color:#1a1a1a;font-weight:normal;transform:scaleX(0.94);transform-origin:0 0;">Lg</div>
<div style="position:absolute;left:425px;top:228.5px;width:1px;height:12px;background:#807e7c"></div>
<div style="position:absolute;left:426px;top:228px;width:1px;height:13px;background:#fff"></div>
<div class="t" style="left:391.1px;top:230.73px;font-size:10px;line-height:10px;color:#1a1a1a;font-weight:normal;transform:scaleX(0.94);transform-origin:0 0;">LTD</div>
<div style="position:absolute;left:442px;top:228.5px;width:1px;height:12px;background:#807e7c"></div>
<div style="position:absolute;left:443px;top:228px;width:1px;height:13px;background:#fff"></div>
<div class="t" style="left:429.3px;top:230.73px;font-size:10px;line-height:10px;color:#1a1a1a;font-weight:normal;transform:scaleX(0.94);transform-origin:0 0;">V</div>
<div style="position:absolute;left:485px;top:228.5px;width:1px;height:12px;background:#807e7c"></div>
<div style="position:absolute;left:486px;top:228px;width:1px;height:13px;background:#fff"></div>
<div class="t" style="left:447.5px;top:230.73px;font-size:10px;line-height:10px;color:#1a1a1a;font-weight:normal;transform:scaleX(0.94);transform-origin:0 0;">PCi</div>
<div style="position:absolute;left:531px;top:228.5px;width:1px;height:12px;background:#807e7c"></div>
<div class="t" style="left:491.1px;top:230.73px;font-size:10px;line-height:10px;color:#1a1a1a;font-weight:normal;transform:scaleX(0.94);transform-origin:0 0;">Fund</div>
<div style="position:absolute;left:225px;top:241px;width:307px;height:1px;background:#a8a6a2"></div>
<div style="position:absolute;left:225px;top:242px;width:34px;height:18px;background:#d4d0c8"></div>
<div style="position:absolute;left:225px;top:242px;width:34px;height:1px;background:#fff"></div>
<div style="position:absolute;left:225px;top:242px;width:1px;height:18px;background:#fff"></div>
<div style="position:absolute;left:260px;top:242px;width:272px;height:18px;background:#fff"></div>
<div style="position:absolute;left:260px;top:242px;width:99px;height:18px;background:#0a246a"></div>
<div style="position:absolute;left:225px;top:260px;width:307px;height:1px;background:#a8a6a2"></div>
<div style="position:absolute;left:259px;top:242px;width:1px;height:18px;background:#a09e9a"></div>
<div style="position:absolute;left:359px;top:242px;width:1px;height:18px;background:#a8a6a2"></div>
<div style="position:absolute;left:385px;top:242px;width:1px;height:18px;background:#a8a6a2"></div>
<div style="position:absolute;left:425px;top:242px;width:1px;height:18px;background:#a8a6a2"></div>
<div style="position:absolute;left:442px;top:242px;width:1px;height:18px;background:#a8a6a2"></div>
<div style="position:absolute;left:485px;top:242px;width:1px;height:18px;background:#a8a6a2"></div>
<div style="position:absolute;left:531px;top:242px;width:1px;height:18px;background:#a8a6a2"></div>
<div class="t" style="left:262.7px;top:246.73px;font-size:10px;line-height:10px;color:#fff;font-weight:normal;transform:scaleX(0.945);transform-origin:0 0;">5990000000 1310000</div>
<div class="t" style="left:362.2px;top:246.73px;font-size:10px;line-height:10px;color:#111;font-weight:normal;transform:scaleX(0.945);transform-origin:0 0;">GL</div>
<div class="t" style="left:388.2px;top:246.73px;font-size:10px;line-height:10px;color:#111;font-weight:normal;transform:scaleX(0.945);transform-origin:0 0;">PAP</div>
<div class="t" style="left:427.2px;top:246.73px;font-size:10px;line-height:10px;color:#111;font-weight:normal;transform:scaleX(0.945);transform-origin:0 0;">D</div>
<div class="t" style="left:444.59999999999997px;top:246.73px;font-size:10px;line-height:10px;color:#111;font-weight:normal;transform:scaleX(0.945);transform-origin:0 0;">010</div>
<svg style="position:absolute;left:230px;top:248px" width="5" height="8" viewBox="0 0 5 8"><polygon points="0,0 5,4 0,8" fill="#000"/></svg>
<div style="position:absolute;left:225px;top:261px;width:34px;height:19px;background:#d4d0c8"></div>
<div style="position:absolute;left:225px;top:261px;width:34px;height:1px;background:#fff"></div>
<div style="position:absolute;left:225px;top:261px;width:1px;height:19px;background:#fff"></div>
<div style="position:absolute;left:260px;top:261px;width:272px;height:19px;background:#fff"></div>
<div style="position:absolute;left:225px;top:280px;width:307px;height:1px;background:#a8a6a2"></div>
<div style="position:absolute;left:259px;top:261px;width:1px;height:19px;background:#a09e9a"></div>
<div style="position:absolute;left:359px;top:261px;width:1px;height:19px;background:#a8a6a2"></div>
<div style="position:absolute;left:385px;top:261px;width:1px;height:19px;background:#a8a6a2"></div>
<div style="position:absolute;left:425px;top:261px;width:1px;height:19px;background:#a8a6a2"></div>
<div style="position:absolute;left:442px;top:261px;width:1px;height:19px;background:#a8a6a2"></div>
<div style="position:absolute;left:485px;top:261px;width:1px;height:19px;background:#a8a6a2"></div>
<div style="position:absolute;left:531px;top:261px;width:1px;height:19px;background:#a8a6a2"></div>
<div class="t" style="left:262.7px;top:265.74px;font-size:10px;line-height:10px;color:#111;font-weight:normal;transform:scaleX(0.945);transform-origin:0 0;">5990000000 1320000</div>
<div class="t" style="left:362.2px;top:265.74px;font-size:10px;line-height:10px;color:#111;font-weight:normal;transform:scaleX(0.945);transform-origin:0 0;">GL</div>
<div class="t" style="left:388.2px;top:265.74px;font-size:10px;line-height:10px;color:#111;font-weight:normal;transform:scaleX(0.945);transform-origin:0 0;">PAP</div>
<div class="t" style="left:427.2px;top:265.74px;font-size:10px;line-height:10px;color:#111;font-weight:normal;transform:scaleX(0.945);transform-origin:0 0;">D</div>
<div class="t" style="left:444.59999999999997px;top:265.74px;font-size:10px;line-height:10px;color:#111;font-weight:normal;transform:scaleX(0.945);transform-origin:0 0;">020</div>
<div style="position:absolute;left:225px;top:281px;width:34px;height:18px;background:#d4d0c8"></div>
<div style="position:absolute;left:225px;top:281px;width:34px;height:1px;background:#fff"></div>
<div style="position:absolute;left:225px;top:281px;width:1px;height:18px;background:#fff"></div>
<div style="position:absolute;left:260px;top:281px;width:272px;height:18px;background:#fff"></div>
<div style="position:absolute;left:225px;top:299px;width:307px;height:1px;background:#a8a6a2"></div>
<div style="position:absolute;left:259px;top:281px;width:1px;height:18px;background:#a09e9a"></div>
<div style="position:absolute;left:359px;top:281px;width:1px;height:18px;background:#a8a6a2"></div>
<div style="position:absolute;left:385px;top:281px;width:1px;height:18px;background:#a8a6a2"></div>
<div style="position:absolute;left:425px;top:281px;width:1px;height:18px;background:#a8a6a2"></div>
<div style="position:absolute;left:442px;top:281px;width:1px;height:18px;background:#a8a6a2"></div>
<div style="position:absolute;left:485px;top:281px;width:1px;height:18px;background:#a8a6a2"></div>
<div style="position:absolute;left:531px;top:281px;width:1px;height:18px;background:#a8a6a2"></div>
<div class="t" style="left:262.7px;top:285.74px;font-size:10px;line-height:10px;color:#111;font-weight:normal;transform:scaleX(0.945);transform-origin:0 0;">5990000000 1330000</div>
<div class="t" style="left:362.2px;top:285.74px;font-size:10px;line-height:10px;color:#111;font-weight:normal;transform:scaleX(0.945);transform-origin:0 0;">GL</div>
<div class="t" style="left:388.2px;top:285.74px;font-size:10px;line-height:10px;color:#111;font-weight:normal;transform:scaleX(0.945);transform-origin:0 0;">PAP</div>
<div class="t" style="left:427.2px;top:285.74px;font-size:10px;line-height:10px;color:#111;font-weight:normal;transform:scaleX(0.945);transform-origin:0 0;">D</div>
<div class="t" style="left:444.59999999999997px;top:285.74px;font-size:10px;line-height:10px;color:#111;font-weight:normal;transform:scaleX(0.945);transform-origin:0 0;">030</div>
<div style="position:absolute;left:225px;top:300px;width:34px;height:17px;background:#d4d0c8"></div>
<div style="position:absolute;left:225px;top:300px;width:34px;height:1px;background:#fff"></div>
<div style="position:absolute;left:225px;top:300px;width:1px;height:17px;background:#fff"></div>
<div style="position:absolute;left:260px;top:300px;width:272px;height:17px;background:#fff"></div>
<div style="position:absolute;left:225px;top:317px;width:307px;height:1px;background:#a8a6a2"></div>
<div style="position:absolute;left:259px;top:300px;width:1px;height:17px;background:#a09e9a"></div>
<div style="position:absolute;left:359px;top:300px;width:1px;height:17px;background:#a8a6a2"></div>
<div style="position:absolute;left:385px;top:300px;width:1px;height:17px;background:#a8a6a2"></div>
<div style="position:absolute;left:425px;top:300px;width:1px;height:17px;background:#a8a6a2"></div>
<div style="position:absolute;left:442px;top:300px;width:1px;height:17px;background:#a8a6a2"></div>
<div style="position:absolute;left:485px;top:300px;width:1px;height:17px;background:#a8a6a2"></div>
<div style="position:absolute;left:531px;top:300px;width:1px;height:17px;background:#a8a6a2"></div>
<div class="t" style="left:262.7px;top:304.74px;font-size:10px;line-height:10px;color:#111;font-weight:normal;transform:scaleX(0.945);transform-origin:0 0;">5990000000 1341000</div>
<div class="t" style="left:362.2px;top:304.74px;font-size:10px;line-height:10px;color:#111;font-weight:normal;transform:scaleX(0.945);transform-origin:0 0;">GL</div>
<div class="t" style="left:388.2px;top:304.74px;font-size:10px;line-height:10px;color:#111;font-weight:normal;transform:scaleX(0.945);transform-origin:0 0;">PAP</div>
<div class="t" style="left:427.2px;top:304.74px;font-size:10px;line-height:10px;color:#111;font-weight:normal;transform:scaleX(0.945);transform-origin:0 0;">D</div>
<div class="t" style="left:444.59999999999997px;top:304.74px;font-size:10px;line-height:10px;color:#111;font-weight:normal;transform:scaleX(0.945);transform-origin:0 0;">041</div>
<div style="position:absolute;left:225px;top:318px;width:34px;height:19px;background:#d4d0c8"></div>
<div style="position:absolute;left:225px;top:318px;width:34px;height:1px;background:#fff"></div>
<div style="position:absolute;left:225px;top:318px;width:1px;height:19px;background:#fff"></div>
<div style="position:absolute;left:260px;top:318px;width:272px;height:19px;background:#fff"></div>
<div style="position:absolute;left:225px;top:337px;width:307px;height:1px;background:#a8a6a2"></div>
<div style="position:absolute;left:259px;top:318px;width:1px;height:19px;background:#a09e9a"></div>
<div style="position:absolute;left:359px;top:318px;width:1px;height:19px;background:#a8a6a2"></div>
<div style="position:absolute;left:385px;top:318px;width:1px;height:19px;background:#a8a6a2"></div>
<div style="position:absolute;left:425px;top:318px;width:1px;height:19px;background:#a8a6a2"></div>
<div style="position:absolute;left:442px;top:318px;width:1px;height:19px;background:#a8a6a2"></div>
<div style="position:absolute;left:485px;top:318px;width:1px;height:19px;background:#a8a6a2"></div>
<div style="position:absolute;left:531px;top:318px;width:1px;height:19px;background:#a8a6a2"></div>
<div class="t" style="left:262.7px;top:322.74px;font-size:10px;line-height:10px;color:#111;font-weight:normal;transform:scaleX(0.945);transform-origin:0 0;">5990000000 1343000</div>
<div class="t" style="left:362.2px;top:322.74px;font-size:10px;line-height:10px;color:#111;font-weight:normal;transform:scaleX(0.945);transform-origin:0 0;">GL</div>
<div class="t" style="left:388.2px;top:322.74px;font-size:10px;line-height:10px;color:#111;font-weight:normal;transform:scaleX(0.945);transform-origin:0 0;">PAP</div>
<div class="t" style="left:427.2px;top:322.74px;font-size:10px;line-height:10px;color:#111;font-weight:normal;transform:scaleX(0.945);transform-origin:0 0;">D</div>
<div class="t" style="left:444.59999999999997px;top:322.74px;font-size:10px;line-height:10px;color:#111;font-weight:normal;transform:scaleX(0.945);transform-origin:0 0;">043</div>
<div style="position:absolute;left:225px;top:338px;width:34px;height:18px;background:#d4d0c8"></div>
<div style="position:absolute;left:225px;top:338px;width:34px;height:1px;background:#fff"></div>
<div style="position:absolute;left:225px;top:338px;width:1px;height:18px;background:#fff"></div>
<div style="position:absolute;left:260px;top:338px;width:272px;height:18px;background:#fff"></div>
<div style="position:absolute;left:225px;top:356px;width:307px;height:1px;background:#a8a6a2"></div>
<div style="position:absolute;left:259px;top:338px;width:1px;height:18px;background:#a09e9a"></div>
<div style="position:absolute;left:359px;top:338px;width:1px;height:18px;background:#a8a6a2"></div>
<div style="position:absolute;left:385px;top:338px;width:1px;height:18px;background:#a8a6a2"></div>
<div style="position:absolute;left:425px;top:338px;width:1px;height:18px;background:#a8a6a2"></div>
<div style="position:absolute;left:442px;top:338px;width:1px;height:18px;background:#a8a6a2"></div>
<div style="position:absolute;left:485px;top:338px;width:1px;height:18px;background:#a8a6a2"></div>
<div style="position:absolute;left:531px;top:338px;width:1px;height:18px;background:#a8a6a2"></div>
<div class="t" style="left:262.7px;top:342.74px;font-size:10px;line-height:10px;color:#111;font-weight:normal;transform:scaleX(0.945);transform-origin:0 0;">5990000000 1351000</div>
<div class="t" style="left:362.2px;top:342.74px;font-size:10px;line-height:10px;color:#111;font-weight:normal;transform:scaleX(0.945);transform-origin:0 0;">GL</div>
<div class="t" style="left:388.2px;top:342.74px;font-size:10px;line-height:10px;color:#111;font-weight:normal;transform:scaleX(0.945);transform-origin:0 0;">PAP</div>
<div class="t" style="left:427.2px;top:342.74px;font-size:10px;line-height:10px;color:#111;font-weight:normal;transform:scaleX(0.945);transform-origin:0 0;">D</div>
<div class="t" style="left:444.59999999999997px;top:342.74px;font-size:10px;line-height:10px;color:#111;font-weight:normal;transform:scaleX(0.945);transform-origin:0 0;">051</div>
<div style="position:absolute;left:225px;top:357px;width:34px;height:18px;background:#d4d0c8"></div>
<div style="position:absolute;left:225px;top:357px;width:34px;height:1px;background:#fff"></div>
<div style="position:absolute;left:225px;top:357px;width:1px;height:18px;background:#fff"></div>
<div style="position:absolute;left:260px;top:357px;width:272px;height:18px;background:#fff"></div>
<div style="position:absolute;left:225px;top:375px;width:307px;height:1px;background:#a8a6a2"></div>
<div style="position:absolute;left:259px;top:357px;width:1px;height:18px;background:#a09e9a"></div>
<div style="position:absolute;left:359px;top:357px;width:1px;height:18px;background:#a8a6a2"></div>
<div style="position:absolute;left:385px;top:357px;width:1px;height:18px;background:#a8a6a2"></div>
<div style="position:absolute;left:425px;top:357px;width:1px;height:18px;background:#a8a6a2"></div>
<div style="position:absolute;left:442px;top:357px;width:1px;height:18px;background:#a8a6a2"></div>
<div style="position:absolute;left:485px;top:357px;width:1px;height:18px;background:#a8a6a2"></div>
<div style="position:absolute;left:531px;top:357px;width:1px;height:18px;background:#a8a6a2"></div>
<div class="t" style="left:262.7px;top:361.74px;font-size:10px;line-height:10px;color:#111;font-weight:normal;transform:scaleX(0.945);transform-origin:0 0;">5990000000 1352000</div>
<div class="t" style="left:362.2px;top:361.74px;font-size:10px;line-height:10px;color:#111;font-weight:normal;transform:scaleX(0.945);transform-origin:0 0;">GL</div>
<div class="t" style="left:388.2px;top:361.74px;font-size:10px;line-height:10px;color:#111;font-weight:normal;transform:scaleX(0.945);transform-origin:0 0;">PAP</div>
<div class="t" style="left:427.2px;top:361.74px;font-size:10px;line-height:10px;color:#111;font-weight:normal;transform:scaleX(0.945);transform-origin:0 0;">D</div>
<div class="t" style="left:444.59999999999997px;top:361.74px;font-size:10px;line-height:10px;color:#111;font-weight:normal;transform:scaleX(0.945);transform-origin:0 0;">052</div>
<div style="position:absolute;left:225px;top:376px;width:34px;height:18px;background:#d4d0c8"></div>
<div style="position:absolute;left:225px;top:376px;width:34px;height:1px;background:#fff"></div>
<div style="position:absolute;left:225px;top:376px;width:1px;height:18px;background:#fff"></div>
<div style="position:absolute;left:260px;top:376px;width:272px;height:18px;background:#fff"></div>
<div style="position:absolute;left:225px;top:394px;width:307px;height:1px;background:#a8a6a2"></div>
<div style="position:absolute;left:259px;top:376px;width:1px;height:18px;background:#a09e9a"></div>
<div style="position:absolute;left:359px;top:376px;width:1px;height:18px;background:#a8a6a2"></div>
<div style="position:absolute;left:385px;top:376px;width:1px;height:18px;background:#a8a6a2"></div>
<div style="position:absolute;left:425px;top:376px;width:1px;height:18px;background:#a8a6a2"></div>
<div style="position:absolute;left:442px;top:376px;width:1px;height:18px;background:#a8a6a2"></div>
<div style="position:absolute;left:485px;top:376px;width:1px;height:18px;background:#a8a6a2"></div>
<div style="position:absolute;left:531px;top:376px;width:1px;height:18px;background:#a8a6a2"></div>
<div class="t" style="left:262.7px;top:380.74px;font-size:10px;line-height:10px;color:#111;font-weight:normal;transform:scaleX(0.945);transform-origin:0 0;">5990000000 1381000</div>
<div class="t" style="left:362.2px;top:380.74px;font-size:10px;line-height:10px;color:#111;font-weight:normal;transform:scaleX(0.945);transform-origin:0 0;">GL</div>
<div class="t" style="left:388.2px;top:380.74px;font-size:10px;line-height:10px;color:#111;font-weight:normal;transform:scaleX(0.945);transform-origin:0 0;">PAP</div>
<div class="t" style="left:427.2px;top:380.74px;font-size:10px;line-height:10px;color:#111;font-weight:normal;transform:scaleX(0.945);transform-origin:0 0;">D</div>
<div class="t" style="left:444.59999999999997px;top:380.74px;font-size:10px;line-height:10px;color:#111;font-weight:normal;transform:scaleX(0.945);transform-origin:0 0;">081</div>
<div style="position:absolute;left:225px;top:395px;width:34px;height:18px;background:#d4d0c8"></div>
<div style="position:absolute;left:225px;top:395px;width:34px;height:1px;background:#fff"></div>
<div style="position:absolute;left:225px;top:395px;width:1px;height:18px;background:#fff"></div>
<div style="position:absolute;left:260px;top:395px;width:272px;height:18px;background:#fff"></div>
<div style="position:absolute;left:225px;top:413px;width:307px;height:1px;background:#a8a6a2"></div>
<div style="position:absolute;left:259px;top:395px;width:1px;height:18px;background:#a09e9a"></div>
<div style="position:absolute;left:359px;top:395px;width:1px;height:18px;background:#a8a6a2"></div>
<div style="position:absolute;left:385px;top:395px;width:1px;height:18px;background:#a8a6a2"></div>
<div style="position:absolute;left:425px;top:395px;width:1px;height:18px;background:#a8a6a2"></div>
<div style="position:absolute;left:442px;top:395px;width:1px;height:18px;background:#a8a6a2"></div>
<div style="position:absolute;left:485px;top:395px;width:1px;height:18px;background:#a8a6a2"></div>
<div style="position:absolute;left:531px;top:395px;width:1px;height:18px;background:#a8a6a2"></div>
<div class="t" style="left:262.7px;top:399.74px;font-size:10px;line-height:10px;color:#111;font-weight:normal;transform:scaleX(0.945);transform-origin:0 0;">5990000000 1382000</div>
<div class="t" style="left:362.2px;top:399.74px;font-size:10px;line-height:10px;color:#111;font-weight:normal;transform:scaleX(0.945);transform-origin:0 0;">GL</div>
<div class="t" style="left:388.2px;top:399.74px;font-size:10px;line-height:10px;color:#111;font-weight:normal;transform:scaleX(0.945);transform-origin:0 0;">PAP</div>
<div class="t" style="left:427.2px;top:399.74px;font-size:10px;line-height:10px;color:#111;font-weight:normal;transform:scaleX(0.945);transform-origin:0 0;">D</div>
<div class="t" style="left:444.59999999999997px;top:399.74px;font-size:10px;line-height:10px;color:#111;font-weight:normal;transform:scaleX(0.945);transform-origin:0 0;">083</div>
<div style="position:absolute;left:225px;top:414px;width:34px;height:18px;background:#d4d0c8"></div>
<div style="position:absolute;left:225px;top:414px;width:34px;height:1px;background:#fff"></div>
<div style="position:absolute;left:225px;top:414px;width:1px;height:18px;background:#fff"></div>
<div style="position:absolute;left:260px;top:414px;width:272px;height:18px;background:#fff"></div>
<div style="position:absolute;left:225px;top:432px;width:307px;height:1px;background:#a8a6a2"></div>
<div style="position:absolute;left:259px;top:414px;width:1px;height:18px;background:#a09e9a"></div>
<div style="position:absolute;left:359px;top:414px;width:1px;height:18px;background:#a8a6a2"></div>
<div style="position:absolute;left:385px;top:414px;width:1px;height:18px;background:#a8a6a2"></div>
<div style="position:absolute;left:425px;top:414px;width:1px;height:18px;background:#a8a6a2"></div>
<div style="position:absolute;left:442px;top:414px;width:1px;height:18px;background:#a8a6a2"></div>
<div style="position:absolute;left:485px;top:414px;width:1px;height:18px;background:#a8a6a2"></div>
<div style="position:absolute;left:531px;top:414px;width:1px;height:18px;background:#a8a6a2"></div>
<div class="t" style="left:262.7px;top:418.74px;font-size:10px;line-height:10px;color:#111;font-weight:normal;transform:scaleX(0.945);transform-origin:0 0;">5990000000 1999000</div>
<div class="t" style="left:362.2px;top:418.74px;font-size:10px;line-height:10px;color:#111;font-weight:normal;transform:scaleX(0.945);transform-origin:0 0;">GL</div>
<div class="t" style="left:388.2px;top:418.74px;font-size:10px;line-height:10px;color:#111;font-weight:normal;transform:scaleX(0.945);transform-origin:0 0;">PAP</div>
<div class="t" style="left:427.2px;top:418.74px;font-size:10px;line-height:10px;color:#111;font-weight:normal;transform:scaleX(0.945);transform-origin:0 0;">D</div>
<div class="t" style="left:444.59999999999997px;top:418.74px;font-size:10px;line-height:10px;color:#111;font-weight:normal;transform:scaleX(0.945);transform-origin:0 0;">099</div>
<div style="position:absolute;left:225px;top:433px;width:34px;height:18px;background:#d4d0c8"></div>
<div style="position:absolute;left:225px;top:433px;width:34px;height:1px;background:#fff"></div>
<div style="position:absolute;left:225px;top:433px;width:1px;height:18px;background:#fff"></div>
<div style="position:absolute;left:260px;top:433px;width:272px;height:18px;background:#fff"></div>
<div style="position:absolute;left:225px;top:451px;width:307px;height:1px;background:#a8a6a2"></div>
<div style="position:absolute;left:259px;top:433px;width:1px;height:18px;background:#a09e9a"></div>
<div style="position:absolute;left:359px;top:433px;width:1px;height:18px;background:#a8a6a2"></div>
<div style="position:absolute;left:385px;top:433px;width:1px;height:18px;background:#a8a6a2"></div>
<div style="position:absolute;left:425px;top:433px;width:1px;height:18px;background:#a8a6a2"></div>
<div style="position:absolute;left:442px;top:433px;width:1px;height:18px;background:#a8a6a2"></div>
<div style="position:absolute;left:485px;top:433px;width:1px;height:18px;background:#a8a6a2"></div>
<div style="position:absolute;left:531px;top:433px;width:1px;height:18px;background:#a8a6a2"></div>
<svg style="position:absolute;left:229.3px;top:437.9px" width="9" height="9" viewBox="0 0 9 9"><g stroke="#000" stroke-width="1.1"><line x1="0.5" y1="4.5" x2="8.5" y2="4.5"/><line x1="2" y1="1.2" x2="7" y2="7.8" stroke="#333"/><line x1="2" y1="7.8" x2="7" y2="1.2" stroke="#333"/></g><circle cx="4.5" cy="4.5" r="1.3" fill="#000"/></svg>
<div style="position:absolute;left:566px;top:227px;width:334px;height:236px;background:#838183"></div>
<div style="position:absolute;left:565px;top:226px;width:335px;height:1px;background:#3a3a3a"></div>
<div style="position:absolute;left:565px;top:225px;width:335px;height:1px;background:#8a8886"></div>
<div style="position:absolute;left:565px;top:225px;width:1px;height:238px;background:#3a3a3a"></div>
<div style="position:absolute;left:566px;top:227px;width:307px;height:14px;background:#d4d0c8"></div>
<div style="position:absolute;left:566px;top:227px;width:307px;height:1px;background:#fff"></div>
<div style="position:absolute;left:566px;top:227px;width:1px;height:14px;background:#fff"></div>
<div style="position:absolute;left:600px;top:228.5px;width:1px;height:12px;background:#807e7c"></div>
<div style="position:absolute;left:601px;top:228px;width:1px;height:13px;background:#fff"></div>
<div style="position:absolute;left:700px;top:228.5px;width:1px;height:12px;background:#807e7c"></div>
<div style="position:absolute;left:701px;top:228px;width:1px;height:13px;background:#fff"></div>
<div class="t" style="left:606.3px;top:230.73px;font-size:10px;line-height:10px;color:#1a1a1a;font-weight:normal;transform:scaleX(0.94);transform-origin:0 0;">Org Key/Object</div>
<div style="position:absolute;left:726px;top:228.5px;width:1px;height:12px;background:#807e7c"></div>
<div style="position:absolute;left:727px;top:228px;width:1px;height:13px;background:#fff"></div>
<div class="t" style="left:706.3px;top:230.73px;font-size:10px;line-height:10px;color:#1a1a1a;font-weight:normal;transform:scaleX(0.94);transform-origin:0 0;">Lg</div>
<div style="position:absolute;left:766px;top:228.5px;width:1px;height:12px;background:#807e7c"></div>
<div style="position:absolute;left:767px;top:228px;width:1px;height:13px;background:#fff"></div>
<div class="t" style="left:732.1px;top:230.73px;font-size:10px;line-height:10px;color:#1a1a1a;font-weight:normal;transform:scaleX(0.94);transform-origin:0 0;">LTD</div>
<div style="position:absolute;left:783px;top:228.5px;width:1px;height:12px;background:#807e7c"></div>
<div style="position:absolute;left:784px;top:228px;width:1px;height:13px;background:#fff"></div>
<div class="t" style="left:770.3px;top:230.73px;font-size:10px;line-height:10px;color:#1a1a1a;font-weight:normal;transform:scaleX(0.94);transform-origin:0 0;">V</div>
<div style="position:absolute;left:826px;top:228.5px;width:1px;height:12px;background:#807e7c"></div>
<div style="position:absolute;left:827px;top:228px;width:1px;height:13px;background:#fff"></div>
<div class="t" style="left:788.5px;top:230.73px;font-size:10px;line-height:10px;color:#1a1a1a;font-weight:normal;transform:scaleX(0.94);transform-origin:0 0;">PCi</div>
<div style="position:absolute;left:872px;top:228.5px;width:1px;height:12px;background:#807e7c"></div>
<div class="t" style="left:832.1px;top:230.73px;font-size:10px;line-height:10px;color:#1a1a1a;font-weight:normal;transform:scaleX(0.94);transform-origin:0 0;">Fund</div>
<div style="position:absolute;left:566px;top:241px;width:307px;height:1px;background:#a8a6a2"></div>
<div style="position:absolute;left:566px;top:242px;width:34px;height:18px;background:#d4d0c8"></div>
<div style="position:absolute;left:566px;top:242px;width:34px;height:1px;background:#fff"></div>
<div style="position:absolute;left:566px;top:242px;width:1px;height:18px;background:#fff"></div>
<div style="position:absolute;left:601px;top:242px;width:272px;height:18px;background:#fff"></div>
<div style="position:absolute;left:601px;top:242px;width:99px;height:18px;background:#0a246a"></div>
<div style="position:absolute;left:566px;top:260px;width:307px;height:1px;background:#a8a6a2"></div>
<div style="position:absolute;left:600px;top:242px;width:1px;height:18px;background:#a09e9a"></div>
<div style="position:absolute;left:700px;top:242px;width:1px;height:18px;background:#a8a6a2"></div>
<div style="position:absolute;left:726px;top:242px;width:1px;height:18px;background:#a8a6a2"></div>
<div style="position:absolute;left:766px;top:242px;width:1px;height:18px;background:#a8a6a2"></div>
<div style="position:absolute;left:783px;top:242px;width:1px;height:18px;background:#a8a6a2"></div>
<div style="position:absolute;left:826px;top:242px;width:1px;height:18px;background:#a8a6a2"></div>
<div style="position:absolute;left:872px;top:242px;width:1px;height:18px;background:#a8a6a2"></div>
<div class="t" style="left:603.7px;top:246.73px;font-size:10px;line-height:10px;color:#fff;font-weight:normal;transform:scaleX(0.945);transform-origin:0 0;">5990000000 TRNS</div>
<div class="t" style="left:703.2px;top:246.73px;font-size:10px;line-height:10px;color:#111;font-weight:normal;transform:scaleX(0.945);transform-origin:0 0;">GL</div>
<div class="t" style="left:729.2px;top:246.73px;font-size:10px;line-height:10px;color:#111;font-weight:normal;transform:scaleX(0.945);transform-origin:0 0;">FAP</div>
<div class="t" style="left:768.2px;top:246.73px;font-size:10px;line-height:10px;color:#111;font-weight:normal;transform:scaleX(0.945);transform-origin:0 0;">D</div>
<div class="t" style="left:829.1px;top:246.73px;font-size:10px;line-height:10px;color:#111;font-weight:normal;transform:scaleX(0.945);transform-origin:0 0;">@@</div>
<svg style="position:absolute;left:571px;top:248px" width="5" height="8" viewBox="0 0 5 8"><polygon points="0,0 5,4 0,8" fill="#000"/></svg>
<div style="position:absolute;left:566px;top:261px;width:34px;height:19px;background:#d4d0c8"></div>
<div style="position:absolute;left:566px;top:261px;width:34px;height:1px;background:#fff"></div>
<div style="position:absolute;left:566px;top:261px;width:1px;height:19px;background:#fff"></div>
<div style="position:absolute;left:601px;top:261px;width:272px;height:19px;background:#fff"></div>
<div style="position:absolute;left:566px;top:280px;width:307px;height:1px;background:#a8a6a2"></div>
<div style="position:absolute;left:600px;top:261px;width:1px;height:19px;background:#a09e9a"></div>
<div style="position:absolute;left:700px;top:261px;width:1px;height:19px;background:#a8a6a2"></div>
<div style="position:absolute;left:726px;top:261px;width:1px;height:19px;background:#a8a6a2"></div>
<div style="position:absolute;left:766px;top:261px;width:1px;height:19px;background:#a8a6a2"></div>
<div style="position:absolute;left:783px;top:261px;width:1px;height:19px;background:#a8a6a2"></div>
<div style="position:absolute;left:826px;top:261px;width:1px;height:19px;background:#a8a6a2"></div>
<div style="position:absolute;left:872px;top:261px;width:1px;height:19px;background:#a8a6a2"></div>
<svg style="position:absolute;left:570.3px;top:265.9px" width="9" height="9" viewBox="0 0 9 9"><g stroke="#000" stroke-width="1.1"><line x1="0.5" y1="4.5" x2="8.5" y2="4.5"/><line x1="2" y1="1.2" x2="7" y2="7.8" stroke="#333"/><line x1="2" y1="7.8" x2="7" y2="1.2" stroke="#333"/></g><circle cx="4.5" cy="4.5" r="1.3" fill="#000"/></svg>
<div style="position:absolute;left:560px;top:225px;width:1px;height:238px;background:#3c3c3c"></div>
<div style="position:absolute;left:565px;top:225px;width:1px;height:238px;background:#3c3c3c"></div>
<div style="position:absolute;left:561px;top:227px;width:4px;height:179.5px;background:linear-gradient(90deg,#8a9cd0,#b4c2e6 50%,#8a9cd0)"></div>
<div style="position:absolute;left:561px;top:407px;width:4px;height:56px;background:linear-gradient(90deg,#d2d0ca,#f0efeb 50%,#d2d0ca)"></div>
<div style="position:absolute;left:562.8px;top:331.3px;width:1.4px;height:1.4px;background:#7c90c4"></div>
<div style="position:absolute;left:562.3px;top:330.8px;width:1.4px;height:1.4px;background:#fff"></div>
<div style="position:absolute;left:562.8px;top:334.90000000000003px;width:1.4px;height:1.4px;background:#7c90c4"></div>
<div style="position:absolute;left:562.3px;top:334.40000000000003px;width:1.4px;height:1.4px;background:#fff"></div>
<div style="position:absolute;left:562.8px;top:338.5px;width:1.4px;height:1.4px;background:#7c90c4"></div>
<div style="position:absolute;left:562.3px;top:338.0px;width:1.4px;height:1.4px;background:#fff"></div>
<div style="position:absolute;left:562.8px;top:342.1px;width:1.4px;height:1.4px;background:#7c90c4"></div>
<div style="position:absolute;left:562.3px;top:341.6px;width:1.4px;height:1.4px;background:#fff"></div>
<div style="position:absolute;left:562.8px;top:345.7px;width:1.4px;height:1.4px;background:#7c90c4"></div>
<div style="position:absolute;left:562.3px;top:345.2px;width:1.4px;height:1.4px;background:#fff"></div>
<div style="position:absolute;left:562.8px;top:349.3px;width:1.4px;height:1.4px;background:#7c90c4"></div>
<div style="position:absolute;left:562.3px;top:348.8px;width:1.4px;height:1.4px;background:#fff"></div>
<div style="position:absolute;left:562.8px;top:352.90000000000003px;width:1.4px;height:1.4px;background:#7c90c4"></div>
<div style="position:absolute;left:562.3px;top:352.40000000000003px;width:1.4px;height:1.4px;background:#fff"></div>
<div style="position:absolute;left:562.8px;top:356.5px;width:1.4px;height:1.4px;background:#7c90c4"></div>
<div style="position:absolute;left:562.3px;top:356.0px;width:1.4px;height:1.4px;background:#fff"></div>
<div style="position:absolute;left:562.8px;top:360.1px;width:1.4px;height:1.4px;background:#7c90c4"></div>
<div style="position:absolute;left:562.3px;top:359.6px;width:1.4px;height:1.4px;background:#fff"></div>
</body></html>
